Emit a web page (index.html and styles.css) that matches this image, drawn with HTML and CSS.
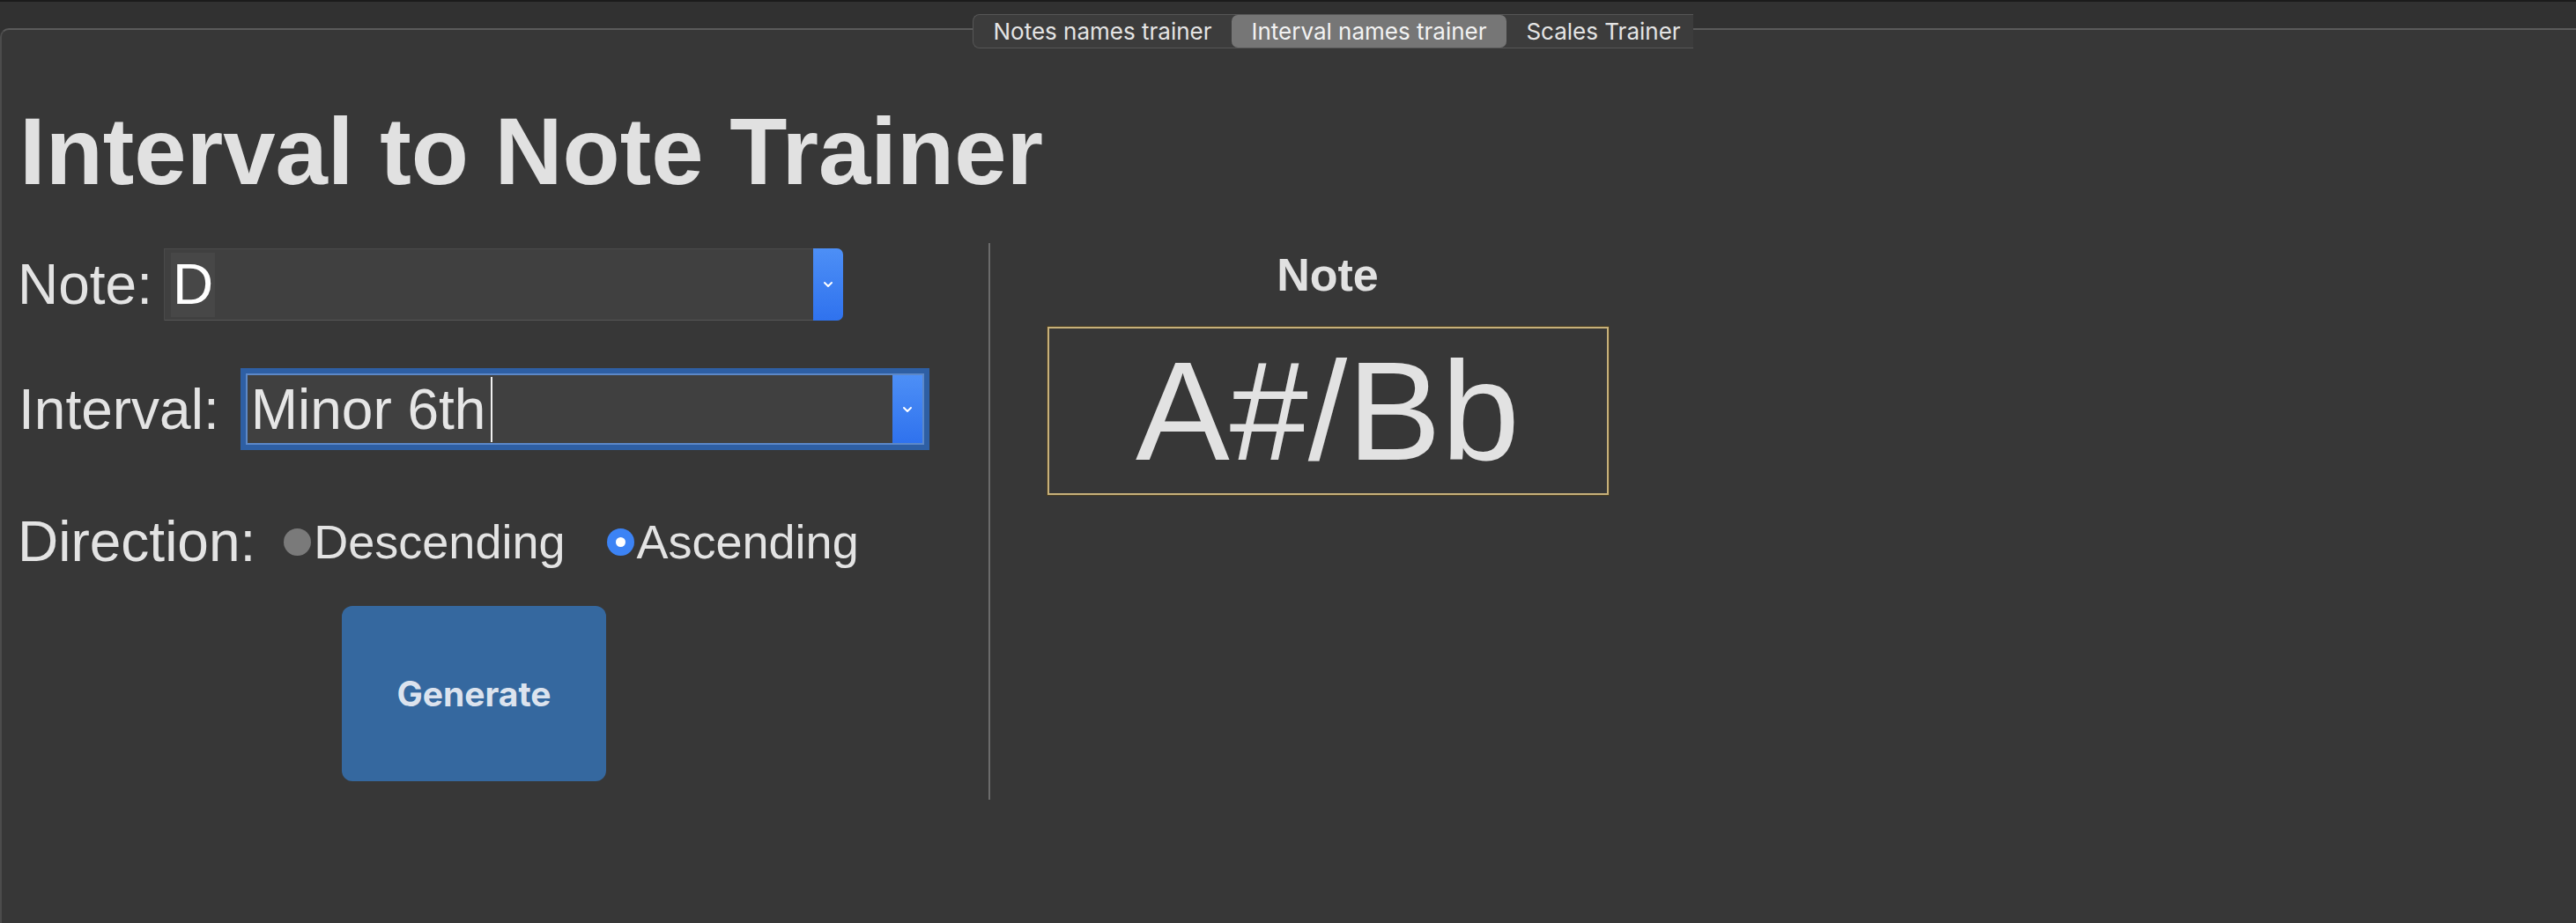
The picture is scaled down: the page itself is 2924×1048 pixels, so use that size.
FILE: index.html
```html
<!DOCTYPE html>
<html lang="en">
<head>
<meta charset="utf-8">
<title>Interval to Note Trainer</title>
<link rel="stylesheet" href="styles.css">
</head>
<body>
<div class="topbar"></div>
<div class="panel">
  <div class="tabs">
    <span class="tab tab-1">Notes names trainer</span>
    <span class="tab tab-2 active">Interval names trainer</span>
    <span class="tab tab-3">Scales Trainer</span>
  </div>
  <h1 class="title">Interval to Note Trainer</h1>
  <div class="main">
    <div class="form">
      <div class="row row-note">
        <span class="label label-note">Note:</span>
        <div class="select select-note">
          <span class="value value-d">D</span>
          <span class="arrow"><svg width="12" height="8" viewBox="0 0 12 8"><path d="M2 2 L6 6 L10 2" fill="none" stroke="#fff" stroke-width="2" stroke-linecap="round" stroke-linejoin="round"/></svg></span>
        </div>
      </div>
      <div class="row row-interval">
        <span class="label label-interval">Interval:</span>
        <div class="select select-interval">
          <span class="value value-interval">Minor 6th</span><span class="caret"></span>
          <span class="arrow"><svg width="12" height="8" viewBox="0 0 12 8"><path d="M2 2 L6 6 L10 2" fill="none" stroke="#fff" stroke-width="2" stroke-linecap="round" stroke-linejoin="round"/></svg></span>
        </div>
      </div>
      <div class="row row-dir">
        <span class="label label-dir">Direction:</span>
        <span class="radio radio-off"></span><span class="radio-label label-desc">Descending</span>
        <span class="radio radio-on"><span class="dot"></span></span><span class="radio-label">Ascending</span>
      </div>
      <button class="generate">Generate</button>
    </div>
    <div class="result">
      <div class="result-title">Note</div>
      <div class="result-box">A#/Bb</div>
    </div>
  </div>
</div>
</body>
</html>
```
FILE: styles.css
```css
* { box-sizing: border-box; }
html, body {
  margin: 0;
  padding: 0;
  width: 2924px;
  height: 1048px;
  overflow: hidden;
  background: #313131;
  font-family: "Liberation Sans", Arial, sans-serif;
  color: #e3e3e3;
}
.topbar {
  height: 32px;
  border-top: 2px solid #1b1b1b;
  background: #313131;
}
.panel {
  position: relative;
  height: 1016px;
  background: #373737;
  border-top: 2px solid #5a5a5a;
  border-left: 2px solid #4c4c4c;
  border-radius: 10px 0 0 0;
  padding-left: 18px;
}
.tabs {
  position: absolute;
  left: 1102px;
  top: -18px;
  height: 39px;
  display: flex;
  background: #3c3c3c;
  border: 1px solid #565656;
  border-right: none;
  border-radius: 8px 0 0 8px;
  font-family: Inter, "Liberation Sans", sans-serif;
  font-size: 26px;
  color: #e4e4e4;
}
.tab {
  height: 37px;
  line-height: 37px;
  text-align: center;
  white-space: nowrap;
}
.tab-1 { width: 293px; }
.tab-2 { width: 312px; }
.tab-3 { width: 212px; padding-left: 8px; }
.tab.active {
  background: #767676;
  border-radius: 7px;
  color: #f2f2f2;
}
.title {
  margin: 85px 0 0 2px;
  font-size: 106.7px;
  line-height: 107px;
  font-weight: bold;
  color: #e1e1e1;
}
.main {
  margin-top: 50px;
  display: flex;
}
.form {
  width: 1104px;
  border-right: 2px solid #6b6b6b;
  padding: 6px 0 21px 0;
  display: flex;
  flex-direction: column;
  align-items: flex-start;
}
.row {
  display: flex;
  align-items: center;
}
.label {
  font-size: 64px;
  white-space: nowrap;
}
.row-note { height: 82px; }
.label-note { margin-right: 13px; }
.row-interval { height: 81px; margin-top: 60px; }
.label-interval { margin-right: 30px; margin-left: 1px; }
.row-dir { height: 60px; margin-top: 80px; }
.label-dir { margin-right: 32px; line-height: 60px; }
.select {
  position: relative;
  display: flex;
  align-items: center;
  background: #404040;
  font-size: 64px;
}
.select-note {
  width: 771px;
  height: 82px;
  border: 1px solid #4a4a4a;
  border-bottom-color: #575757;
  border-radius: 0 7px 7px 0;
}
.select-interval {
  width: 770px;
  height: 81px;
  border: 2px solid #5c88c8;
  box-shadow: 0 0 0 6px #2e5fa4;
}
.value { white-space: nowrap; }
.value-d {
  margin-left: 7px;
  background: #474747;
  color: #ffffff;
  line-height: 73px;
  height: 73px;
  padding: 0 2px 0 2px;
}
.value-interval {
  margin-left: 4px;
  color: #e6e6e6;
}
.caret {
  display: inline-block;
  width: 2px;
  height: 74px;
  background: #f0f0f0;
  margin-left: 6px;
}
.arrow {
  position: absolute;
  right: -1px;
  top: -1px;
  bottom: -1px;
  width: 34px;
  display: flex;
  align-items: center;
  justify-content: center;
  background: linear-gradient(#4d8ff6, #2f72ee);
  border-radius: 0 7px 7px 0;
}
.select-interval .arrow {
  right: 0;
  top: 0;
  bottom: 0;
  border-radius: 0;
  width: 34px;
}
.radio {
  width: 31px;
  height: 31px;
  border-radius: 50%;
  flex: none;
}
.radio-off {
  background: #7a7a7a;
}
.radio-on {
  background: #3c83f5;
  display: flex;
  align-items: center;
  justify-content: center;
  margin-left: 47px;
}
.dot {
  width: 11px;
  height: 11px;
  border-radius: 50%;
  background: #ffffff;
}
.radio-label {
  font-size: 54px;
  line-height: 60px;
  margin-left: 3px;
  white-space: nowrap;
}
.generate {
  margin: 43px 0 0 368px;
  width: 300px;
  height: 199px;
  background: #35689f;
  border: none;
  border-radius: 12px;
  font-family: Inter, "Liberation Sans", sans-serif;
  font-weight: 700;
  font-size: 39px;
  color: #dce3ee;
  padding: 0;
}
.result {
  width: 766px;
  display: flex;
  flex-direction: column;
  align-items: center;
}
.result-title {
  margin-top: 6px;
  font-size: 52px;
  line-height: 60px;
  font-weight: bold;
  color: #e1e1e1;
}
.result-box {
  margin-top: 29px;
  width: 637px;
  height: 191px;
  border: 2px solid #c6b07a;
  box-shadow: 0 0 0 1px #4a3d21;
  display: flex;
  align-items: center;
  justify-content: center;
  font-size: 160px;
  line-height: 160px;
  color: #e2e2e2;
}
```
